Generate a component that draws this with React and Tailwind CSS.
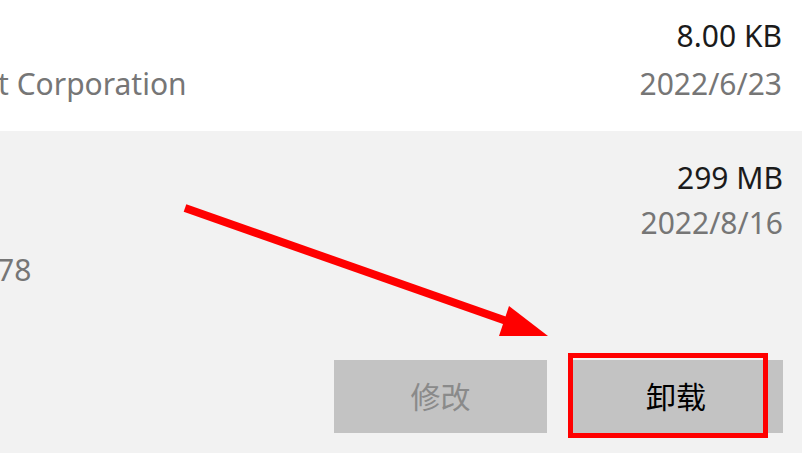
export default function App() {
  const font = { fontFamily: '"Noto Sans", "Noto Sans CJK SC", sans-serif' };
  return (
    <div className="relative h-[453px] w-[802px] overflow-hidden bg-[#f2f2f2] text-[30px]" style={font}>
      {/* previous row */}
      <div className="flex h-[131px] justify-between bg-white pr-[20px]">
        <div className="pt-[60px] leading-[48px] text-[#767676] -ml-[2px]">t Corporation</div>
        <div className="flex flex-col items-end pt-[12px] leading-[48px]">
          <div className="text-[#1b1b1b]">8.00 KB</div>
          <div className="text-[#767676]">2022/6/23</div>
        </div>
      </div>

      {/* selected row */}
      <div className="flex flex-col">
        <div className="flex justify-between pr-[19px]">
          <div className="-ml-[3px] pt-[116px] leading-[45px] text-[#767676]">78</div>
          <div className="flex flex-col items-end pt-[24px] leading-[45px]">
            <div className="text-[#1b1b1b]">299 MB</div>
            <div className="text-[#767676]">2022/8/16</div>
          </div>
        </div>
        <div className="mt-[68px] flex justify-end gap-[22px] pr-[19px]">
          <button className="flex h-[73px] w-[213px] items-center justify-center bg-[#c3c3c3] text-[30px] text-[#8a8a8a]">
            修改
          </button>
          <button className="flex h-[73px] w-[214px] items-center justify-center bg-[#c3c3c3] text-[30px] text-black">
            卸载
          </button>
        </div>
      </div>

      {/* annotation */}
      <div className="absolute left-[568px] top-[353px] h-[85px] w-[200px] border-[5px] border-[#ff0000]" />
      <svg className="absolute left-0 top-0" width="802" height="453" viewBox="0 0 802 453">
        <line x1="185" y1="208" x2="512" y2="323" stroke="#ff0000" strokeWidth="8" />
        <polygon points="509,306 499,336 548,336" fill="#ff0000" />
      </svg>
    </div>
  );
}
